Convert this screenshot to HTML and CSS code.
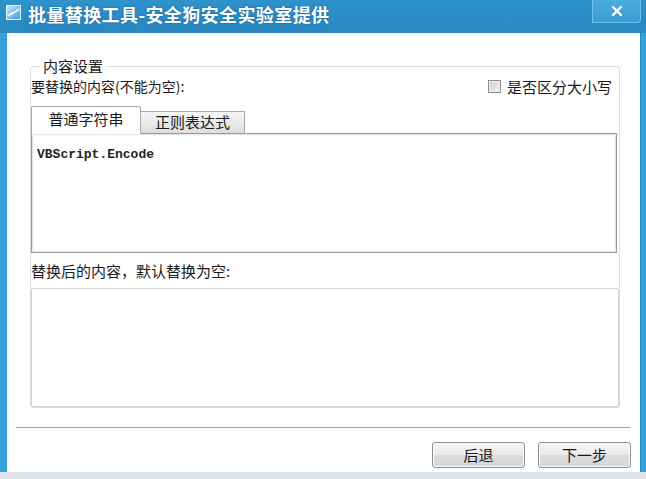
FILE: index.html
```html
<!DOCTYPE html>
<html lang="zh-CN">

<head>
    <meta charset="UTF-8">
    <title>批量替换工具</title>
    <link rel="stylesheet" href="styles.css">
</head>

<body>
    <div class="window">
        <div class="titlebar">
            <svg class="app-icon" width="15" height="15" viewBox="0 0 15 15">
                <defs>
                    <linearGradient id="ig" x1="0" y1="0" x2="1" y2="1">
                        <stop offset="0" stop-color="#c9ecff" />
                        <stop offset="1" stop-color="#3f95d6" />
                    </linearGradient>
                </defs>
                <rect x="0.5" y="0.5" width="14" height="14" fill="url(#ig)" stroke="#e8f6ff" />
                <path d="M2 11 C5 8, 8 9, 13 4" fill="none" stroke="#ffffff" stroke-width="1.6" />
            </svg>
            <span class="title">批量替换工具-安全狗安全实验室提供</span>
            <button class="close-btn" aria-label="关闭">
                <svg width="12" height="12" viewBox="0 0 12 12">
                    <path d="M2 2 L10 10 M10 2 L2 10" stroke="#ffffff" stroke-width="2.4" stroke-linecap="round" />
                </svg>
            </button>
        </div>

        <div class="frame">
            <div class="content">
                <fieldset class="group">
                    <legend>内容设置</legend>

                    <div class="row">
                        <span class="label-sm">要替换的内容(不能为空):</span>
                        <label class="check">
                            <span class="check-box"></span>
                            是否区分大小写
                        </label>
                    </div>

                    <div class="tabs">
                        <div class="tab active">普通字符串</div>
                        <div class="tab">正则表达式</div>
                    </div>
                    <div class="tab-panel">VBScript.Encode</div>

                    <div class="label">替换后的内容，默认替换为空:</div>
                    <div class="output-box"></div>
                </fieldset>

                <div class="separator"></div>

                <div class="buttons">
                    <button class="btn">后退</button>
                    <button class="btn">下一步</button>
                </div>
            </div>
        </div>

        <div class="status-strip"></div>
    </div>
</body>

</html>
```

FILE: styles.css
```css
*,
*::before,
*::after {
    box-sizing: border-box;
    margin: 0;
    padding: 0;
}

:root {
    --title-blue: #2a8bc6;
    --border-blue: #36a0d8;
    --text: #1a1a1a;
    --gray-line: #a0a0a0;
    --light-line: #d4d4d4;
}

html,
body {
    width: 646px;
    height: 479px;
    overflow: hidden;
}

body {
    font-family: "Noto Sans CJK SC", "DejaVu Sans", sans-serif;
    color: var(--text);
    background: #ffffff;
}

.window {
    display: flex;
    flex-direction: column;
    height: 479px;
}

/* title bar */
.titlebar {
    height: 33px;
    flex: none;
    display: flex;
    align-items: flex-start;
    background: linear-gradient(#2e92cb, #2787c1);
    padding-left: 6px;
    padding-right: 5px;
}

.app-icon {
    margin-top: 5px;
    flex: none;
}

.title {
    margin-left: 7px;
    margin-top: 3px;
    font-size: 18px;
    line-height: 22px;
    font-weight: bold;
    letter-spacing: 0.4px;
    color: #ffffff;
    text-shadow: 0 0 2px rgba(0, 40, 80, 0.5);
    white-space: nowrap;
}

.close-btn {
    margin-left: auto;
    width: 49px;
    height: 23px;
    border: 1px solid #6fc0ea;
    border-top: none;
    border-radius: 0 0 4px 0;
    background: linear-gradient(#4aabde, #3a9dd4);
    display: flex;
    align-items: center;
    justify-content: center;
}

/* frame */
.frame {
    flex: 1;
    min-height: 0;
    overflow: hidden;
    display: flex;
    border-left: 7px solid var(--border-blue);
    border-right: 5px solid var(--border-blue);
}

.content {
    flex: 1;
    display: flex;
    flex-direction: column;
    background: #ffffff;
    border-right: 1px solid #2a86bd;
}

.group {
    flex: none;
    margin: 25px 20px 0 23px;
    border: 1px solid #dcdcdc;
    border-radius: 3px;
    padding: 0;
    display: flex;
    flex-direction: column;
}

.group legend {
    margin-left: 9px;
    padding: 0 3px;
    font-size: 15px;
    line-height: 16px;
}

.row {
    margin-top: 4px;
    display: flex;
    justify-content: space-between;
    align-items: center;
    height: 17px;
    padding-right: 7px;
}

.label-sm {
    font-size: 14px;
    line-height: 17px;
}

.check {
    display: flex;
    align-items: center;
    gap: 6px;
    font-size: 15px;
    line-height: 17px;
}

.check-box {
    width: 13px;
    height: 13px;
    border: 1px solid #8f8f8f;
    background: linear-gradient(135deg, #cfcfcf, #f4f4f4);
    box-shadow: inset 0 0 0 1px #f0f0f0;
}

/* tabs */
.tabs {
    margin-top: 11px;
    display: flex;
    align-items: flex-end;
    height: 27px;
    position: relative;
    z-index: 1;
}

.tab {
    font-size: 15px;
    line-height: 20px;
    text-align: center;
    border: 1px solid #a9a9a9;
    border-bottom: none;
}

.tab.active {
    width: 110px;
    height: 28px;
    margin-bottom: -1px;
    padding-top: 2px;
    background: #ffffff;
    border-radius: 2px 2px 0 0;
}

.tab:not(.active) {
    width: 104px;
    height: 22px;
    background: linear-gradient(#f6f6f6, #dedede);
    border-left: none;
}

.tab-panel {
    height: 120px;
    margin-right: 2px;
    border: 1px solid #9a9a9a;
    box-shadow: inset 0 0 0 1px #e6e6e6, inset 0 0 0 2px #fafafa;
    padding: 13px 5px 6px;
    font-family: "Liberation Mono", monospace;
    font-size: 13px;
    line-height: 16px;
    font-weight: bold;
    color: #222222;
}

.label {
    margin-top: 9px;
    font-size: 15px;
    line-height: 17px;
}

.output-box {
    margin-top: 9px;
    height: 119px;
    border: 1px solid #d2d2d2;
    border-radius: 2px;
}

.separator {
    flex: none;
    margin: 19px 10px 0 9px;
    height: 2px;
    border-top: 1px solid var(--gray-line);
    border-bottom: 1px solid #ffffff;
}

.buttons {
    flex: none;
    margin-top: 13px;
    display: flex;
    justify-content: flex-end;
    gap: 13px;
    padding-right: 9px;
}

.btn {
    width: 93px;
    height: 26px;
    font-family: "Noto Sans CJK SC", sans-serif;
    font-size: 15px;
    line-height: 20px;
    color: var(--text);
    border: 1px solid #8e8f8f;
    border-radius: 3px;
    background: linear-gradient(#f6f6f6 0%, #ebebeb 50%, #dcdcdc 51%, #d6d6d6 100%);
    box-shadow: inset 0 0 0 1px #fafafa;
}

.status-strip {
    height: 7px;
    flex: none;
    background: #dfe4e8;
}
```
